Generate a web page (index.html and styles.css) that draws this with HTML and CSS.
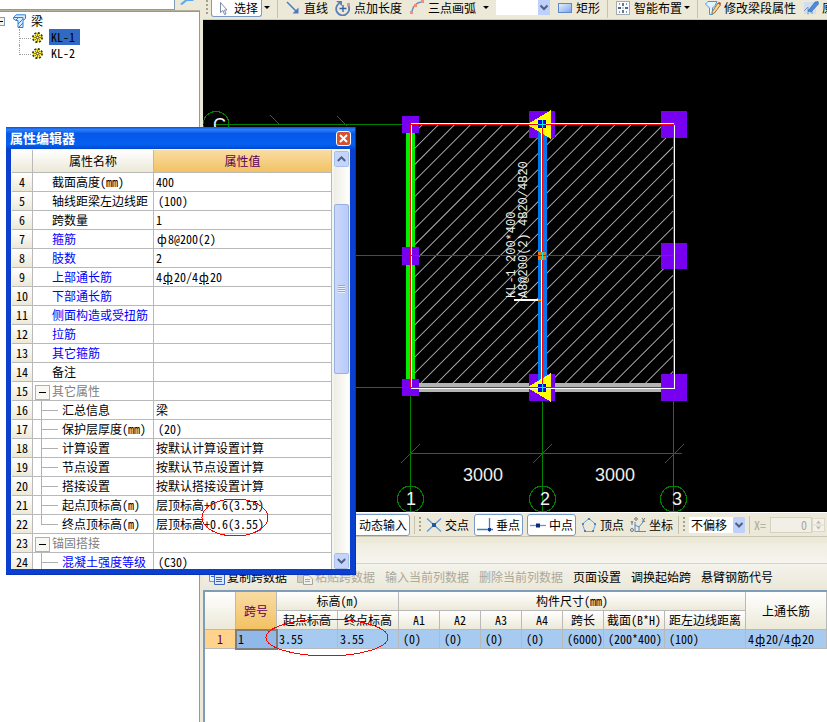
FILE: index.html
```html
<!DOCTYPE html>
<html lang="zh-CN">
<head>
<meta charset="utf-8">
<title>梁 - 属性编辑器</title>
<link rel="stylesheet" href="styles.css">
</head>
<body>
<div class="app">
  <aside class="side">
    <div class="search">
      <div class="search-box"></div>
      <button class="search-btn" aria-label="搜索"><svg width="18" height="6" viewBox="0 0 18 6"><path d="M6 0L1 4L3 5L8 1H14L15 0Z" fill="#5aa9ee"/></svg></button>
    </div>
    <ul class="tree">
      <li class="node root">
        <svg class="minus" width="9" height="9" viewBox="0 0 9 9"><rect x=".5" y=".5" width="8" height="8" fill="#f4f2ea" stroke="#7f9db9"/><path d="M2 4.500H7" stroke="#000"/></svg>
        <svg width="13" height="15" viewBox="0 0 13 15"><path d="M.5 3.500L3 .8H12.500V4.500L10 6.500V13.500H5V6.500H3L.5 5Z" fill="#d8edff" stroke="#2a7fd4"/><path d="M1 3.500H10V6M3 6L6 3M5 10L10 5M6 13L10 9" stroke="#2a7fd4" fill="none"/></svg>
        <span>梁</span>
      </li>
      <li class="node leaf"><svg width="11" height="11" viewBox="0 0 11 11"><circle cx="5.500" cy="5.500" r="4.500" fill="none" stroke="#3c3900" stroke-width="2" stroke-dasharray="2 1.500"/><circle cx="5.500" cy="5.500" r="3.500" fill="#ffee00"/><path d="M5.500 1.500V9.500M1.500 5.500H9.500M3 3L8 8M8 3L3 8" stroke="#6a6200" stroke-width=".7"/><circle cx="5.500" cy="5.500" r="1.200" fill="#fff" stroke="#333" stroke-width=".7"/></svg><a class="label on" href="#">KL-1</a></li>
      <li class="node leaf last"><svg width="11" height="11" viewBox="0 0 11 11"><circle cx="5.500" cy="5.500" r="4.500" fill="none" stroke="#3c3900" stroke-width="2" stroke-dasharray="2 1.500"/><circle cx="5.500" cy="5.500" r="3.500" fill="#ffee00"/><path d="M5.500 1.500V9.500M1.500 5.500H9.500M3 3L8 8M8 3L3 8" stroke="#6a6200" stroke-width=".7"/><circle cx="5.500" cy="5.500" r="1.200" fill="#fff" stroke="#333" stroke-width=".7"/></svg><a class="label" href="#">KL-2</a></li>
    </ul>
  </aside>

  <main class="main">
    <div class="toolbar top">
      <i class="grip"></i>
      <button class="tool pressed split"><svg width="16" height="16" viewBox="0 0 16 16"><path d="M5.500 2.500V12.500L8 10.500L9.500 14.500L11 14L9.500 10H12Z" fill="#fff" stroke="#7c8cae"/></svg>选择</button>
      <i class="arrow"></i><i class="sep"></i>
      <button class="tool"><svg width="16" height="16" viewBox="0 0 16 16"><path d="M2 2L12 12" stroke="#4a7ac0" stroke-width="1.500"/><path d="M13.500 13.500V7.500L7.500 13.500Z" fill="#4a7ac0"/></svg>直线</button>
      <button class="tool"><svg width="16" height="16" viewBox="0 0 16 16"><path d="M4 3.500A6.500 6.500 0 1 0 13.500 6" fill="none" stroke="#5b7fb5" stroke-width="1.800"/><path d="M1 1H7V6Z" fill="#5b7fb5"/><path d="M8 5V12M4.500 8.500H11.500" stroke="#385f9c" stroke-width="1.300"/><rect x="12" y="3" width="3" height="3" fill="#ee8f80"/></svg>点加长度</button>
      <button class="tool"><svg width="16" height="16" viewBox="0 0 16 16"><path d="M3 13C3 7 7 2 14 2" fill="none" stroke="#6d93c6" stroke-width="1.500"/><g fill="#ee8f80"><rect x="1" y="11" width="3" height="3"/><rect x="5" y="4" width="3" height="3"/><rect x="12" y="0" width="3" height="3"/></g></svg>三点画弧</button>
      <i class="arrow"></i>
      <select class="combo wide" aria-label="构件"><option></option></select>
      <button class="tool"><svg width="16" height="16" viewBox="0 0 16 16"><defs><linearGradient id="g1" x2="1" y2="1"><stop stop-color="#e8f2ff"/><stop offset="1" stop-color="#7aa4ea"/></linearGradient></defs><rect x="1.500" y="3.500" width="13" height="9" fill="url(#g1)" stroke="#5f88cf"/></svg>矩形</button>
      <i class="sep"></i>
      <button class="tool split"><svg width="16" height="16" viewBox="0 0 16 16"><rect x="1.500" y="1.500" width="13" height="13" fill="#f8fbff" stroke="#567" stroke-dasharray="1 1"/><path d="M8 3V6M8 10V13M3 8H6M10 8H13" stroke="#234" stroke-width="1.300"/><path d="M4 4H5M11 4H12M4 12H5M11 12H12M7.500 8H8.500" stroke="#5b80c0" stroke-width="1.500"/></svg>智能布置</button>
      <i class="arrow"></i><i class="sep"></i>
      <button class="tool"><svg width="16" height="16" viewBox="0 0 16 16"><path d="M.5 4L3 1.500H12L10 5.500L7.500 8V14.500H4.500V8Z" fill="#e2f2ff" stroke="#4d94d8"/><path d="M7 12L13 3L15.500 5L9.500 13L7 14Z" fill="#f7d58a" stroke="#9b7440"/><path d="M13 3L15.500 5L16 3L14 2Z" fill="#d33"/></svg>修改梁段属性</button>
      <button class="tool"><svg width="16" height="16" viewBox="0 0 16 16"><rect x="1" y="2" width="12" height="12" fill="#cfdff2"/><path d="M1 11L5 7V14.500M5 10H9V14" stroke="#7d96b8" fill="none"/><path d="M5 11L12 2L15 1.500L15.500 4L8 12Z" fill="#4d8be0" stroke="#2b62b0" stroke-width=".6"/></svg>原</button>
    </div>

    <div class="canvas">
      <svg class="drawing" role="img" aria-label="梁平面图">
        <defs><clipPath id="bays"><path d="M415 125H538V383H415ZM547 125H673V383H547Z"/></clipPath></defs>
        <g transform="translate(-203 -20)" shape-rendering="crispEdges" fill="none">
          <path d="M214 124.500H411M203 255.500H411M203 387.500H411M410.500 387V512M542.500 387V512M673.500 387V512M411 453.500H682M270 115L280 125M337 116L347 126M401 463L420 444M533 463L552 444M665 463L684 444" stroke="#008200"/>
          <g stroke="#008200"><circle cx="216" cy="124.500" r="13"/><circle cx="410.500" cy="499" r="13"/><circle cx="542.500" cy="499" r="13"/><circle cx="673.500" cy="499" r="13"/></g>
          <g clip-path="url(#bays)" shape-rendering="auto"><path d="M418.250 128.250l270 270" stroke="#b4b4b4" stroke-width="620" stroke-dasharray=".9 10.450"/></g>
          <path fill="#00f000" d="M406 133h9v246h-9z"/>
          <path fill="#b4b4b4" d="M419 383h242v9H419z"/>
          <path fill="#7800f0" d="M402 116h17v17h-17zM402 247h17v18h-17zM402 379h17v17h-17zM529 111h26v27h-26zM529 374h26v27h-26zM661 111h26v27h-26zM661 243h26v26h-26zM661 374h26v27h-26z"/>
          <path fill="#0078f0" d="M538 128h9v256h-9z"/>
          <path fill="#ff0" d="M527 124.500L551 110V139ZM527 387.500L551 373V402Z"/>
          <path d="M411 123.500H674M411.500 124V388M674.500 125V388M411 388.500H675M541.500 128V384" stroke="#fff"/>
          <path d="M514 300H540" stroke="#fff" stroke-width="2"/>
          <path d="M411 124.500H674M410.500 124V388M673.500 124V388M411 387.500H674M411 255.500H674M542.500 124V388" stroke="#f00"/>
          <path fill="#0000f0" d="M538 120h8v8h-8zM538 384h8v8h-8z"/>
          <path fill="#f07800" d="M538 252h8v8h-8z"/>
          <path d="M538 255.500h8" stroke="#f00"/>
          <path d="M538 124.500h8M542.500 120v8M538 387.500h8M542.500 384v8M542.500 252v8" stroke="#00f0f0"/>
          <path fill="#f07800" d="M538 299h3v2h-3z"/>
        </g>
        <g transform="translate(-203 -20)" class="cad">
          <text x="463" y="481">3000</text><text x="595" y="481">3000</text>
          <text x="406" y="505">1</text><text x="540" y="505">2</text><text x="672" y="505">3</text><text x="213" y="131">C</text>
          <text class="note" transform="translate(515 298) rotate(-90)">KL-1 200*400</text>
          <text class="note" transform="translate(527 298) rotate(-90)">A8@200(2) 4B20/4B20</text>
        </g>
      </svg>
    </div>

    <div class="toolbar snap">
      <button class="tool pressed"><svg width="16" height="16" viewBox="0 0 16 16"><rect x="1" y="2" width="14" height="12" fill="#a33a3a"/></svg>动态输入</button>
      <i class="sep"></i><i class="grip"></i>
      <button class="tool"><svg width="16" height="16" viewBox="0 0 16 16"><path d="M1 1.500L15 14.500M15 1.500L1 14.500" stroke="#5c98dc" stroke-width="1.200"/><rect x="6" y="6" width="4" height="4" fill="#24569c"/></svg>交点</button>
      <button class="tool pressed"><svg width="16" height="16" viewBox="0 0 16 16"><path d="M0 12.500H16M12.500 1V15" stroke="#3c7cc8" stroke-width="1.300"/><rect x="11" y="11" width="3" height="3" fill="#123c8c"/></svg>垂点</button>
      <button class="tool pressed"><svg width="16" height="16" viewBox="0 0 16 16"><path d="M0 8.500H16" stroke="#5c98dc" stroke-width="1.300"/><rect x="6" y="6.500" width="4" height="4" fill="#0a2a80"/></svg>中点</button>
      <button class="tool"><svg width="16" height="16" viewBox="0 0 16 16"><path d="M8 1.500L14.500 7L12 14.500H4L1.500 7Z" fill="none" stroke="#6aa2e0"/><path d="M8 1v2M14 6v2M2 6v2M4 13v2M12 13v2" stroke="#356db4" stroke-width="1.500"/></svg>顶点</button>
      <button class="tool"><svg width="16" height="16" viewBox="0 0 16 16"><path d="M5 5V14.500H16M5 8L9 10L14 4M9 10V14" fill="none" stroke="#4d8ad0"/><path d="M1 4l1 2l1-2M2 6v2M12 1l3 4M15 1l-3 4" stroke="#777" fill="none"/><circle cx="2" cy="13" r="1.500" fill="none" stroke="#777"/><circle cx="6" cy="2" r="1.300" fill="none" stroke="#777"/></svg>坐标</button>
      <i class="sep"></i><i class="grip"></i>
      <select class="combo" aria-label="偏移"><option>不偏移</option></select>
      <i class="sep"></i>
      <label class="off" for="dx">X=</label>
      <span class="spin"><input id="dx" value="0" disabled><svg width="13" height="14" viewBox="0 0 13 14"><rect x=".5" y=".5" width="12" height="13" fill="#f3f1e8" stroke="#dcd9cb"/><path d="M0 7H13" stroke="#dcd9cb"/><path d="M4 5.500L6.500 2.500L9 5.500ZM4 8.500L6.500 11.500L9 8.500Z" fill="#c0bdb0"/></svg></span>
    </div>
    <div class="band"></div>

    <div class="toolbar data">
      <button class="tool"><svg width="16" height="16" viewBox="0 0 16 16"><path d="M.5 2.500H9.500V12.500H.5Z" fill="#e5efff" stroke="#6d94dc"/><path d="M5.500 5.500H15.500V15.500H5.500Z" fill="#dce9ff" stroke="#3c68c0"/><path d="M7 8.500H13M7 10.500H13M7 12.500H13M2 5.500H5M2 7.500H5" stroke="#3c68c0"/></svg>复制跨数据</button>
      <button class="tool" disabled><svg width="16" height="16" viewBox="0 0 16 16"><path d="M.5 2.500H10.500V13.500H.5Z" fill="#d0cec4" stroke="#b5b2a5"/><path d="M6.500 6.500H12L15.500 10V15.500H6.500Z" fill="#f2f1ec" stroke="#a8a598"/><path d="M8 10.500H13M8 12.500H13" stroke="#a8a598"/></svg>粘贴跨数据</button>
      <button class="tool" disabled>输入当前列数据</button>
      <button class="tool" disabled>删除当前列数据</button>
      <button class="tool">页面设置</button>
      <button class="tool">调换起始跨</button>
      <button class="tool">悬臂钢筋代号</button>
    </div>

    <section class="sheet">
      <table class="spans">
        <colgroup><col class="c31"><col class="c41"><col class="c61"><col class="c61"><col class="c41"><col class="c41"><col class="c41"><col class="c41"><col class="c41"><col class="c61"><col class="c81"><col class="c81"></colgroup>
        <thead>
          <tr><th rowspan="2"></th><th rowspan="2" class="hot">跨号</th><th colspan="2">标高(m)</th><th colspan="7">构件尺寸(mm)</th><th rowspan="2">上通长筋</th></tr>
          <tr><th>起点标高</th><th>终点标高</th><th>A1</th><th>A2</th><th>A3</th><th>A4</th><th>跨长</th><th>截面(B*H)</th><th>距左边线距离</th></tr>
        </thead>
        <tbody>
          <tr><th class="rowno">1</th><td class="cur">1</td><td>3.55</td><td>3.55</td><td class="in">(0)</td><td class="in">(0)</td><td class="in">(0)</td><td class="in">(0)</td><td class="in">(6000)</td><td class="in">(200*400)</td><td class="in">(100)</td><td>4<span class="bar u">ф</span>20/4<span class="bar u">ф</span>20</td></tr>
        </tbody>
      </table>
      <svg class="mark span-mark" width="124" height="39" viewBox="0 0 124 39"><ellipse cx="62" cy="19.500" rx="61" ry="18.500"/></svg>
    </section>
  </main>
</div>

<section class="dialog" role="dialog" aria-labelledby="dlg-title">
  <header class="caption"><h1 id="dlg-title">属性编辑器</h1>
    <button class="close" aria-label="关闭"><svg width="13" height="13" viewBox="0 0 13 13"><path d="M3 3L10 10M10 3L3 10" stroke="#fff" stroke-width="2"/></svg></button></header>
  <div class="body">
    <div class="view">
      <table class="props">
        <colgroup><col class="n"><col class="k"><col></colgroup>
        <thead><tr><th></th><th>属性名称</th><th class="hot">属性值</th></tr></thead>
        <tbody>
          <tr><th>4</th><td>截面高度(mm)</td><td>400</td></tr>
          <tr><th>5</th><td>轴线距梁左边线距</td><td class="in">(100)</td></tr>
          <tr><th>6</th><td>跨数量</td><td>1</td></tr>
          <tr class="key"><th>7</th><td>箍筋</td><td><span class="bar">ф</span>8@200(2)</td></tr>
          <tr class="key"><th>8</th><td>肢数</td><td>2</td></tr>
          <tr class="key"><th>9</th><td>上部通长筋</td><td>4<span class="bar u">ф</span>20/4<span class="bar u">ф</span>20</td></tr>
          <tr class="key"><th>10</th><td>下部通长筋</td><td></td></tr>
          <tr class="key"><th>11</th><td>侧面构造或受扭筋</td><td></td></tr>
          <tr class="key"><th>12</th><td>拉筋</td><td></td></tr>
          <tr class="key"><th>13</th><td>其它箍筋</td><td></td></tr>
          <tr><th>14</th><td>备注</td><td></td></tr>
          <tr class="group"><th>15</th><td>其它属性</td><td></td></tr>
          <tr class="sub"><th>16</th><td>汇总信息</td><td>梁</td></tr>
          <tr class="sub"><th>17</th><td>保护层厚度(mm)</td><td class="in">(20)</td></tr>
          <tr class="sub"><th>18</th><td>计算设置</td><td>按默认计算设置计算</td></tr>
          <tr class="sub"><th>19</th><td>节点设置</td><td>按默认节点设置计算</td></tr>
          <tr class="sub"><th>20</th><td>搭接设置</td><td>按默认搭接设置计算</td></tr>
          <tr class="sub"><th>21</th><td>起点顶标高(m)</td><td>层顶标高+0.6(3.55)</td></tr>
          <tr class="sub end"><th>22</th><td>终点顶标高(m)</td><td>层顶标高+0.6(3.55)</td></tr>
          <tr class="group"><th>23</th><td>锚固搭接</td><td></td></tr>
          <tr class="sub key"><th>24</th><td>混凝土强度等级</td><td class="in">(C30)</td></tr>
        </tbody>
      </table>
    </div>
    <div class="scroll">
      <button class="sbtn" aria-label="向上"><svg width="9" height="6" viewBox="0 0 9 6"><path d="M.8 5L4.500 1.300L8.200 5" fill="none" stroke="#4d6185" stroke-width="2"/></svg></button>
      <div class="track"><div class="thumb"></div></div>
      <button class="sbtn" aria-label="向下"><svg width="9" height="6" viewBox="0 0 9 6"><path d="M.8 1L4.500 4.700L8.200 1" fill="none" stroke="#4d6185" stroke-width="2"/></svg></button>
    </div>
  </div>
  <svg class="mark prop-mark" width="68" height="39" viewBox="0 0 68 39"><ellipse cx="34" cy="19.500" rx="33" ry="18.500"/></svg>
</section>
</body>
</html>
```
FILE: styles.css
```css
* { box-sizing: border-box; }
body, button, input, select, table {
  font: 12px/16px "Noto Sans Mono CJK SC", "Noto Sans CJK SC", sans-serif;
  color: #000;
}
body { margin: 0; background: #ece9d8; overflow: hidden; }
button { border: 0; padding: 0; margin: 0; background: none; }
svg { display: block; flex: none; }

.app { display: grid; grid-template-columns: 203px minmax(0, 1fr); height: 100vh; }

/* component tree */
.side { display: flex; flex-direction: column; padding-right: 3px; }
.search { display: flex; height: 11px; border-bottom: 1px solid #b5b196; }
.search-box { flex: 1; background: #fff; border: solid #7f9db9; border-width: 0 1px 1px 0; }
.search-btn { width: 25px; display: flex; justify-content: center; }
.tree {
  flex: 1; margin: 0; padding: 1px 0 0; list-style: none; background: #fff;
  border: solid #7f9db9; border-width: 1px 1px 0 0;
}
.node { display: flex; align-items: center; height: 16px; }
.root { gap: 5px; }
.minus { margin-left: -4px; margin-right: 3px; }
.leaf { position: relative; padding-left: 32px; gap: 6px; }
.leaf::before {
  content: ""; position: absolute; left: 19px; top: 0; width: 11px; height: 9px;
  border: dotted #a0a0a0; border-width: 0 0 1px 1px;
}
.leaf:not(.last)::after { content: ""; position: absolute; left: 19px; top: 9px; height: 7px; border-left: 1px dotted #a0a0a0; }
.label { color: #000; text-decoration: none; padding: 0 5px 0 2px; line-height: 16px; }
.label.on { background: #316ac5; }

/* toolbars */
.main { display: flex; flex-direction: column; min-width: 0; }
.toolbar { display: flex; align-items: center; overflow: hidden; white-space: nowrap; }
.tool { display: flex; align-items: center; gap: 3px; flex: none; height: 22px; }
.tool:disabled { color: #aca899; }
.pressed { background: #fff; border: 1px solid #7a9ac5; border-radius: 3px; padding: 0 2px; }
.grip { flex: none; width: 2px; height: 16px; background: repeating-linear-gradient(#a5a290 0 2px, transparent 2px 4px); }
.sep { flex: none; width: 1px; height: 18px; background: #c5c2b2; }
.arrow { flex: none; border: solid transparent; border-width: 3px 3px 0; border-top-color: #000; }
.combo {
  flex: none; appearance: none; border: 0; border-radius: 0; width: 56px; height: 16px; padding: 0 2px; margin: 0;
  background: #fff url("data:image/svg+xml,%3Csvg xmlns='http://www.w3.org/2000/svg' width='12' height='16'%3E%3Crect width='12' height='16' rx='1' fill='%23bfd0fb'/%3E%3Cpath d='M2.500 6L6 9.500L9.500 6' fill='none' stroke='%234d6185' stroke-width='2'/%3E%3C/svg%3E") right center no-repeat;
}

/* the top bar is docked against the window edge */
.top { height: 20px; gap: 7px; padding: 0 0 3px 3px; border-bottom: 1px solid #c9d0b8; align-items: flex-start; }
.top .grip { margin-right: -4px; }
.top .tool { height: 16px; }
.top .arrow { margin-top: 6px; }
.top .pressed { height: 17px; border-top: 0; border-radius: 0 0 3px 3px; padding: 0 3px; }
.top .split { margin-right: -5px; }
.top .combo { width: 54px; height: 15px; }
.snap { height: 25px; gap: 4px; padding-left: 134px; border-top: 1px solid #fff; border-bottom: 1px solid #c9c6b6; }
.snap .tool:not(.pressed) { padding: 0 1px; }
.off { color: #aca899; }
.spin { display: flex; flex: none; align-items: center; }
.spin input { width: 42px; height: 16px; border: 1px solid #d5d2c4; background: #f1efe6; color: #aca899; text-align: right; padding: 0 4px; }
.band { height: 27px; border-top: 6px solid #ece9d8; border-bottom: 1px solid #d6d3c2; background: linear-gradient(#f0eee2, #f5f4ee); }
.data { height: 26px; gap: 10px; padding-left: 6px; background: linear-gradient(#f4f3ec, #ebe8d8); }
.data .tool { gap: 2px; }

/* drawing area */
.canvas { flex: 1; min-height: 0; background: #000; }
.drawing { width: 100%; height: 100%; }
.cad { fill: #f0f0f0; font: 18px "Liberation Sans", sans-serif; }
.note { font: 12px "Liberation Mono", monospace; }

/* tables */
table { border-collapse: separate; border-spacing: 0; table-layout: fixed; }
th, td {
  padding: 0; font-weight: 400; white-space: nowrap; overflow: hidden;
  border: solid #b9b9b9; border-width: 0 1px 1px 0; height: 19px; line-height: 16px;
}
th { background: linear-gradient(#fff, #ece9d8); text-align: center; }
td { padding-left: 2px; }
td.in { padding-left: 4px; }
th.hot { background: linear-gradient(#f9dca4, #f2c262); color: #5a005a; }
.bar { display: inline-block; width: 12px; text-align: center; line-height: 12px; }
.u { text-decoration: underline; }

.sheet { position: relative; height: 132px; background: #fff; border: solid #7f9db9; border-width: 2px 0 0 2px; }
.spans { width: 622px; }
.spans td { background: #a6caf0; padding-left: 2px; }
.spans td.in { padding-left: 4px; }
.spans .rowno { background: #ffd38c; color: #5a005a; }
.spans .cur { background: #90b8e8; outline: 2px solid #7d7d7d; outline-offset: -1px; }
.c31 { width: 31px; } .c41 { width: 41px; } .c61 { width: 61px; } .c81 { width: 81px; }

/* annotation rings */
.mark { position: absolute; fill: none; stroke: #f00; shape-rendering: crispEdges; }
.span-mark { left: 60px; top: 26px; }
.prop-mark { left: 195px; top: 371px; }

/* property window */
.dialog {
  position: absolute; left: 6px; top: 127px; width: 350px; height: 448px;
  display: flex; flex-direction: column; padding: 0 5px 5px;
  background: #0a3fd0; border: solid #0831b8; border-width: 0 1px 1px 0;
}
.caption {
  display: flex; align-items: center; justify-content: space-between; height: 22px; flex: none;
  margin: 0 -5px; padding: 0 5px 0 4px;
  background: linear-gradient(#1250d8, #2b80f8 12%, #0558e8 30%, #0560f0 80%, #0048d0);
}
.caption h1 { margin: 0; font-size: 13px; line-height: 18px; font-weight: 700; color: #fff; }
.close { width: 13px; height: 13px; border-radius: 2px; background: #d9502c; outline: 1px solid #fff; }
.body { flex: 1; min-height: 0; display: flex; background: #f5f4ee; padding: 1px 0 0 1px; }
.view { flex: 1; overflow: hidden; background: #fff; }
.props { width: 100%; }
.props .n { width: 21px; } .props .k { width: 121px; }
.props thead th { height: 23px; }
.props td:nth-child(2) { padding-left: 19px; position: relative; }
.key td:nth-child(2) { color: #00f; }
.group td:nth-child(2) { color: #808080; }
.group td:nth-child(2)::before {
  content: ""; position: absolute; left: 2px; top: 3px; width: 13px; height: 13px; border: 1px solid #b0b0b0;
  background: linear-gradient(#000, #000) center / 7px 1px no-repeat, #f8f7f2;
}
.props .sub td:nth-child(2) { padding-left: 29px; }
.sub td:nth-child(2)::before { content: ""; position: absolute; left: 8px; top: 0; height: 19px; border-left: 1px solid #b0b0b0; }
.sub.end td:nth-child(2)::before { height: 9px; }
.sub td:nth-child(2)::after { content: ""; position: absolute; left: 8px; top: 9px; width: 17px; border-top: 1px solid #b0b0b0; }
.scroll { width: 18px; padding: 1px 1px 0 2px; display: flex; flex-direction: column; }
.sbtn {
  height: 16px; flex: none; display: flex; align-items: center; justify-content: center;
  background: #c5d4fb; border: 1px solid #fff; border-radius: 2px; outline: 1px solid #a9bfe8; outline-offset: -1px;
}
.track { flex: 1; background: linear-gradient(90deg, #eeede5, #fefefb); padding-top: 37px; }
.thumb {
  height: 170px; border: 1px solid #98b0e0; border-radius: 2px;
  background: repeating-linear-gradient(#8ea8e0 0 1px, #e8effe 1px 2px) center / 7px 8px no-repeat, linear-gradient(90deg, #cad8fc, #b9cafa);
}
```
